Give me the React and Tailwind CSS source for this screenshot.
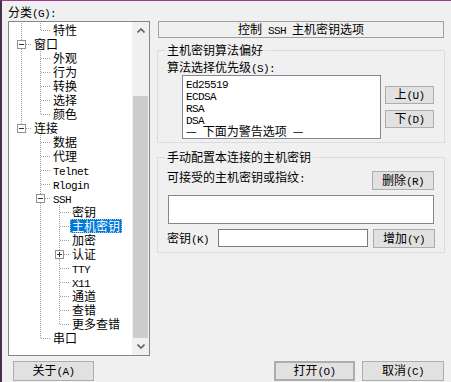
import React from 'react';

// split text into latin / CJK runs so latin gets the narrow half-width look
function Txt({ children }) {
  const parts = String(children).match(/[\u0000-\u00ff]+|[^\u0000-\u00ff]+/g) || [];
  return (
    <span className="inline-block whitespace-pre align-top">
      {parts.map((p, i) =>
        /^[\u0000-\u00ff]/.test(p) ? (
          <span key={i} className="font-['Liberation_Mono',monospace] text-[11px] tracking-[-0.6px]">
            {p}
          </span>
        ) : (
          <span key={i}>{p}</span>
        )
      )}
    </span>
  );
}

const tree = [
  { label: '特性', guides: [true], last: true },
  { label: '窗口', guides: [], last: false, exp: 'minus' },
  { label: '外观', guides: [true], last: false },
  { label: '行为', guides: [true], last: false },
  { label: '转换', guides: [true], last: false },
  { label: '选择', guides: [true], last: false },
  { label: '颜色', guides: [true], last: true },
  { label: '连接', guides: [], last: true, exp: 'minus' },
  { label: '数据', guides: [false], last: false },
  { label: '代理', guides: [false], last: false },
  { label: 'Telnet', guides: [false], last: false },
  { label: 'Rlogin', guides: [false], last: false },
  { label: 'SSH', guides: [false], last: false, exp: 'minus' },
  { label: '密钥', guides: [false, true], last: false },
  { label: '主机密钥', guides: [false, true], last: false, selected: true },
  { label: '加密', guides: [false, true], last: false },
  { label: '认证', guides: [false, true], last: false, exp: 'plus' },
  { label: 'TTY', guides: [false, true], last: false },
  { label: 'X11', guides: [false, true], last: false },
  { label: '通道', guides: [false, true], last: false },
  { label: '查错', guides: [false, true], last: false },
  { label: '更多查错', guides: [false, true], last: true },
  { label: '串口', guides: [false], last: true },
];

function Cell({ kind, exp }) {
  const line = { stroke: '#a0a0a0', strokeWidth: 1, strokeDasharray: '1 1' };
  return (
    <svg width="19" height="14" className="block shrink-0" shapeRendering="crispEdges">
      {(kind === 'pipe' || kind === 'tee') && <line x1="9.5" y1="0" x2="9.5" y2="14" {...line} />}
      {kind === 'elbow' && <line x1="9.5" y1="0" x2="9.5" y2="8" {...line} />}
      {(kind === 'tee' || kind === 'elbow') && <line x1="10" y1="7.5" x2="19" y2="7.5" {...line} />}
      {exp && (
        <g>
          <rect x="5.5" y="3.5" width="8" height="8" fill="#fff" stroke="#919191" />
          <line x1="7" y1="7.5" x2="12" y2="7.5" stroke="#333" />
          {exp === 'plus' && <line x1="9.5" y1="5" x2="9.5" y2="10" stroke="#333" />}
        </g>
      )}
    </svg>
  );
}

function TreeRow({ item }) {
  return (
    <div className="flex h-[14px] items-center leading-[14px]">
      {item.guides.map((g, i) => (
        <Cell key={i} kind={g ? 'pipe' : 'none'} />
      ))}
      <Cell kind={item.last ? 'elbow' : 'tee'} exp={item.exp} />
      <span
        className={
          item.selected
            ? 'ml-px h-[14px] whitespace-nowrap bg-[#0078d7] px-[2px] text-white outline-1 outline-dotted outline-[#9cc6f0] -outline-offset-1'
            : 'ml-px h-[14px] whitespace-nowrap px-[2px]'
        }
      >
        <Txt>{item.label}</Txt>
      </span>
    </div>
  );
}

function Arrow({ up }) {
  return (
    <svg width="8" height="5" viewBox="0 0 8 5">
      <polyline
        points={up ? '0.5,4.5 4,1 7.5,4.5' : '0.5,0.5 4,4 7.5,0.5'}
        fill="none"
        stroke="#606060"
        strokeWidth="1.6"
      />
    </svg>
  );
}

function Btn({ children, className = '' }) {
  return (
    <div
      className={`flex items-center justify-center border border-[#adadad] bg-[#e1e1e1] leading-[12px] ${className}`}
    >
      <Txt>{children}</Txt>
    </div>
  );
}

export default function App() {
  return (
    <div className="flex h-[382px] w-[451px] flex-col overflow-hidden border-t border-l-2 border-t-[#9a3a96] border-l-[#4a2d4c] bg-[#f0f0f0] font-['Noto_Sans_CJK_SC',sans-serif] text-[12px] leading-[12px] text-black">
      <div className="flex items-start">
        {/* category tree */}
        <div className="ml-[6px] w-[142px] shrink-0">
          <div className="mt-[5px] h-[12px] whitespace-nowrap">
            <Txt>分类(G):</Txt>
          </div>
          <div className="mt-[3px] flex h-[335px] border border-[#828790] bg-white">
            <div className="flex-1 overflow-hidden pl-[3px] pt-px">
              {tree.map((item) => (
                <TreeRow key={item.label} item={item} />
              ))}
            </div>
            <div className="flex w-[17px] flex-col bg-[#f0f0f0]">
              <div className="flex h-[17px] items-center justify-center">
                <Arrow up />
              </div>
              <div className="flex flex-1 flex-col justify-end px-px">
                <div className="h-[242px] bg-[#cdcdcd]" />
              </div>
              <div className="flex h-[17px] items-center justify-center">
                <Arrow />
              </div>
            </div>
          </div>
        </div>

        {/* options panel */}
        <div className="ml-[7px] mt-[20px] w-[288px] shrink-0">
          <div className="mx-px flex h-[17px] items-center justify-center border border-[#a0a0a0] whitespace-nowrap">
            <Txt>控制 SSH 主机密钥选项</Txt>
          </div>

          <fieldset className="mt-[6px] border border-[#dcdcdc] pb-[3px]">
            <legend className="ml-[7px] px-[2px] leading-[12px]">
              <Txt>主机密钥算法偏好</Txt>
            </legend>
            <div className="mt-[5px] h-[12px] pl-[9px]">
              <Txt>算法选择优先级(S):</Txt>
            </div>
            <div className="mt-[2px] flex items-start">
              <div className="ml-[24px] h-[64px] w-[199px] border border-[#828790] bg-white pl-[3px] pt-px">
                {['Ed25519', 'ECDSA', 'RSA', 'DSA', '— 下面为警告选项 —'].map((t) => (
                  <div key={t} className="h-[12px] whitespace-nowrap leading-[12px]">
                    <Txt>{t}</Txt>
                  </div>
                ))}
              </div>
              <div className="ml-[4px] mt-[11px] flex flex-col gap-[6px]">
                <Btn className="h-[18px] w-[49px]">上(U)</Btn>
                <Btn className="h-[18px] w-[49px]">下(D)</Btn>
              </div>
            </div>
          </fieldset>

          <fieldset className="mt-[8px] border border-[#dcdcdc] pb-[4px]">
            <legend className="ml-[7px] px-[2px] leading-[12px]">
              <Txt>手动配置本连接的主机密钥</Txt>
            </legend>
            <div className="mt-[8px] flex items-start justify-between pl-[9px] pr-[10px]">
              <div className="h-[12px] whitespace-nowrap">
                <Txt>可接受的主机密钥或指纹:</Txt>
              </div>
              <Btn className="h-[19px] w-[62px]">删除(R)</Btn>
            </div>
            <div className="ml-[10px] mt-[5px] h-[29px] w-[266px] border border-[#828790] bg-white" />
            <div className="mt-[5px] flex items-start pl-[9px]">
              <div className="w-[51px] self-center whitespace-nowrap">
                <Txt>密钥(K)</Txt>
              </div>
              <div className="h-[18px] w-[150px] border border-[#7a7a7a] bg-white" />
              <Btn className="ml-[5px] h-[19px] w-[62px]">增加(Y)</Btn>
            </div>
          </fieldset>
        </div>
      </div>

      {/* dialog buttons */}
      <div className="mt-[5px] flex">
        <Btn className="ml-[11px] h-[20px] w-[81px]">关于(A)</Btn>
        <Btn className="ml-auto h-[20px] w-[81px] border-2 border-[#0078d7]">打开(O)</Btn>
        <Btn className="ml-[7px] mr-[7px] h-[20px] w-[82px]">取消(C)</Btn>
      </div>
    </div>
  );
}
